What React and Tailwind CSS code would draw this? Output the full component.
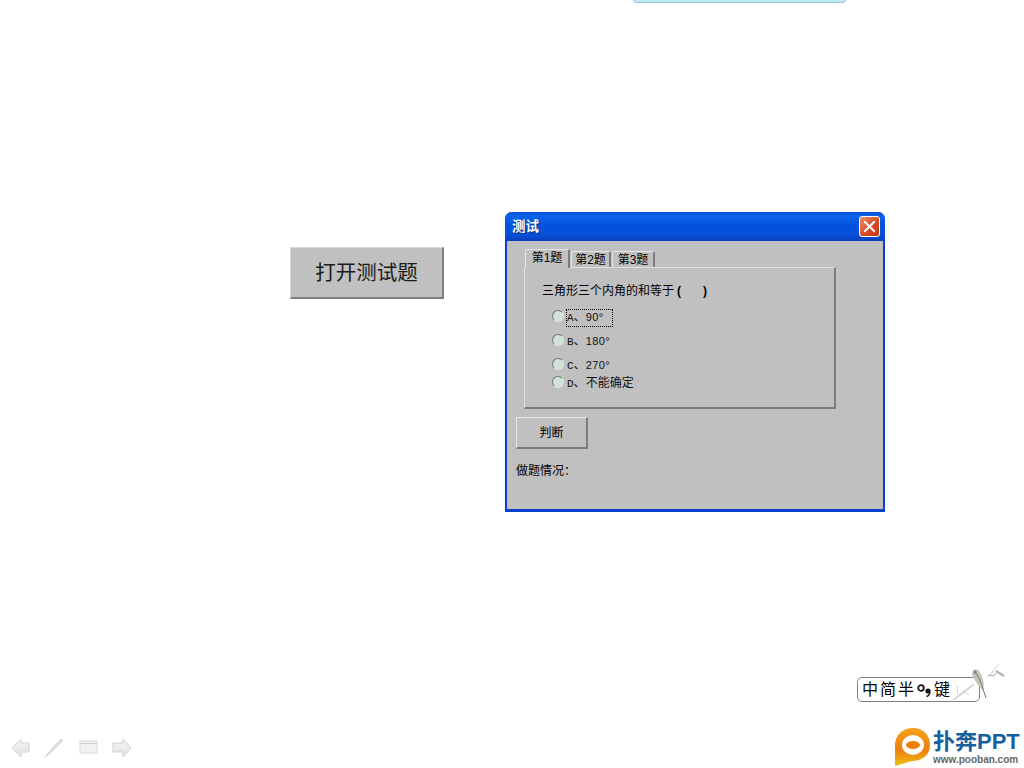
const CJK = "font-['Liberation_Sans','Noto_Sans_CJK_SC',sans-serif]";

const options = [
  { id: "A", rest: "90°", h: "h-[24px]", focused: true },
  { id: "B", rest: "180°", h: "h-[24px]" },
  { id: "C", rest: "270°", h: "h-[24px]" },
  { id: "D", rest: "不能确定", h: "h-[12px]", cjk: true },
];

const Radio = () => (
  <span className="w-[12px] h-[12px] rounded-full shrink-0 border border-[#737873] border-r-[#dfe3df] border-b-[#dfe3df] bg-[#cfe3d6] -ml-px" />
);

const Tab = ({ label, className }) => (
  <div className={`flex items-center justify-center border-l border-t border-[#e4e4e4] border-r-2 border-r-[#7c7c7c] rounded-t-[2px] ${className}`}>
    <span className="text-[12px] leading-none text-black">{label}</span>
  </div>
);

const Dialog = () => (
  <div className={`absolute left-[505px] top-[212px] w-[380px] h-[300px] flex flex-col rounded-t-[7px] bg-[#0a3fd0] ${CJK}`}>
    <div className="h-[29px] shrink-0 flex items-center justify-between pl-[7px] pr-[5px] rounded-t-[7px] bg-[linear-gradient(180deg,#0b4fd6_0%,#0a62ea_14%,#0453dc_45%,#0450d8_80%,#0a3fb8_100%)]">
      <span className="text-[13.5px] font-bold text-white leading-none pt-px [text-shadow:1px_1px_0_#0a2a80]">测试</span>
      <div className="w-[21px] h-[21px] rounded-[3px] border border-white bg-[linear-gradient(135deg,#e8906c,#d4481f_60%,#c23a18)] flex items-center justify-center">
        <svg width="13" height="13" viewBox="0 0 13 13">
          <path d="M2 2L11 11M11 2L2 11" stroke="#fff" strokeWidth="2" strokeLinecap="square" />
        </svg>
      </div>
    </div>

    <div className="flex-1 mx-[2px] mb-[3px] bg-[#c0c0c0] pl-[9px] pt-[8px]">
      <div className="ml-[9px] flex gap-px items-start h-[18px]">
        <Tab label="第1题" className="w-[45px] h-[19px] pb-[3px] relative z-10 bg-[#c0c0c0]" />
        <Tab label="第2题" className="w-[40px] h-[16px] mt-[2px]" />
        <Tab label="第3题" className="w-[43px] h-[16px] mt-[2px]" />
      </div>

      <div className="ml-[8px] w-[312px] h-[142px] border-t border-l border-[#e0e0e0] border-r-2 border-b-2 border-r-[#7c7c7c] border-b-[#7c7c7c] pl-[17px] pt-[14px]">
        <div className="text-[12px] leading-[18px] text-black h-[18px] whitespace-nowrap">
          三角形三个内角的和等于
          <span className="font-bold ml-[3px]">(</span>
          <span className="font-bold ml-[22px]">)</span>
        </div>
        <div className="mt-[4px] pl-[11px] flex flex-col">
          {options.map((o) => (
            <div key={o.id} className={`flex items-center gap-[3px] ${o.h}`}>
              <Radio />
              <span
                className={`text-[12px] leading-[13px] text-[#111] whitespace-nowrap mt-[3px] ${
                  o.focused ? "outline-1 outline-dotted outline-black pr-[9px] py-px" : ""
                }`}
              >
                <span className="text-[11px] font-['Liberation_Mono',monospace]">{o.id}</span>、
                {o.cjk ? o.rest : <span className="text-[11px] tracking-[0.4px]">{o.rest}</span>}
              </span>
            </div>
          ))}
        </div>
      </div>

      <button className="block mt-[8px] w-[72px] h-[32px] border border-[#e6e6e6] border-r-2 border-b-2 border-r-[#7c7c7c] border-b-[#7c7c7c] bg-[#c0c0c0] text-[12px] leading-none text-black">
        判断
      </button>
      <div className="mt-[14px] text-[12px] leading-[16px] text-black">做题情况：</div>
    </div>
  </div>
);

const NavIcons = () => (
  <div className="absolute left-[10px] top-[737px]">
    <svg width="124" height="22" viewBox="0 0 124 22">
      <defs>
        <linearGradient id="nav" x1="0" y1="0" x2="0" y2="1">
          <stop offset="0" stopColor="#f6f6f6" />
          <stop offset="1" stopColor="#e2e2e2" />
        </linearGradient>
      </defs>
      <path d="M2 11L11 2V6H19V15H11V20Z" fill="url(#nav)" stroke="#d2d2d2" />
      <path d="M35 20C42 15 48 9 53 3L51 2C45 8 40 14 35 20Z" fill="#e6e6e6" stroke="#cdcdcd" />
      <rect x="70" y="4" width="17" height="12" fill="#f2f2f2" stroke="#dadada" />
      <path d="M70 6.5H87" stroke="#cfcfcf" />
      <path d="M121 11L113 2V6H103V15H113V20Z" fill="url(#nav)" stroke="#d2d2d2" />
    </svg>
  </div>
);

const Bird = () => (
  <svg className="absolute left-[950px] top-[660px]" width="56" height="44" viewBox="0 0 56 44">
    <path d="M3 40C10 35 17 30 24 24" stroke="#c9c9c4" strokeWidth="1.5" fill="none" />
    <path d="M8 35L7 26M13 31L19 35" stroke="#d4d4ce" fill="none" />
    <path d="M22 14C22 10 25 8 28 10C30 11 31 14 33 19C34 24 34 28 33 30C30 28 25 22 22 14Z" fill="#c4c4ba" />
    <path d="M26 13C29 17 31 23 33 29L36 38" stroke="#77776e" fill="none" />
    <circle cx="25" cy="12" r="1.5" fill="#7c7c74" />
    <path d="M37 18L49 4M39 16L44 11" stroke="#d8d8d0" fill="none" />
    <path d="M38 15L44 16L46 13" stroke="#a9a9a0" fill="none" />
    <path d="M46 11L54 16" stroke="#b4b4ac" strokeWidth="2.5" fill="none" />
  </svg>
);

const InputBar = () => (
  <div className={`absolute left-[857px] top-[677px] w-[123px] h-[25px] rounded-[5px] border border-[#808080] bg-white flex items-center pl-[4px] text-black ${CJK}`}>
    <span className="text-[16px] leading-none tracking-[2px]">中简半</span>
    <svg className="ml-px" width="15" height="14" viewBox="0 0 15 14">
      <circle cx="4" cy="5" r="2.8" fill="none" stroke="#111" strokeWidth="1.8" />
      <circle cx="11" cy="8" r="2.6" fill="#111" />
      <path d="M12.5 9C13 11 11.5 13 9.5 13.5" stroke="#111" strokeWidth="1.6" fill="none" />
    </svg>
    <span className="text-[16px] leading-none ml-[2px]">键</span>
  </div>
);

const Logo = () => (
  <div className={`absolute left-[895px] top-[728px] flex items-start ${CJK}`}>
    <svg width="35" height="38" viewBox="0 0 35 38">
      <defs>
        <linearGradient id="lg" x1="0" y1="0" x2="0" y2="1">
          <stop offset="0" stopColor="#f6a21b" />
          <stop offset="0.6" stopColor="#ee7f0c" />
          <stop offset="1" stopColor="#eac312" />
        </linearGradient>
      </defs>
      <path d="M0 17C0 7 8 0 18 0C28 0 35 7 35 17C35 27 27 33 17 33L0 38Z" fill="url(#lg)" />
      <ellipse cx="18" cy="17" rx="11" ry="10" fill="#fff" />
      <ellipse cx="18" cy="17" rx="7" ry="4" fill="#ef7d0a" />
    </svg>
    <div className="ml-[3px] flex flex-col w-[88px]">
      <div className="h-[24px] mt-[2px] text-[22px] text-[#17609f] font-bold leading-[24px] whitespace-nowrap">扑奔PPT</div>
      <span className="text-[10px] font-bold leading-[11px] text-[#666] whitespace-nowrap">www.pooban.com</span>
    </div>
  </div>
);

export default function App() {
  return (
    <div className="relative w-[1024px] h-[768px] overflow-hidden bg-white">
      {/* cut-off shape at the top of the slide */}
      <div className="absolute left-[632px] -top-[8px] w-[215px] h-[11px] rounded-b-[5px] bg-[#bfeaf5] border border-[#8ec4d8]" />

      <button className={`absolute left-[290px] top-[247px] w-[154px] h-[52px] pt-px bg-[#c0c0c0] border border-[#d8d8d8] border-r-2 border-b-2 border-r-[#808080] border-b-[#808080] text-[20.5px] leading-none text-[#1a1a1a] ${CJK}`}>
        打开测试题
      </button>

      <Dialog />
      <InputBar />
      <Bird />
      <Logo />
      <NavIcons />
    </div>
  );
}
